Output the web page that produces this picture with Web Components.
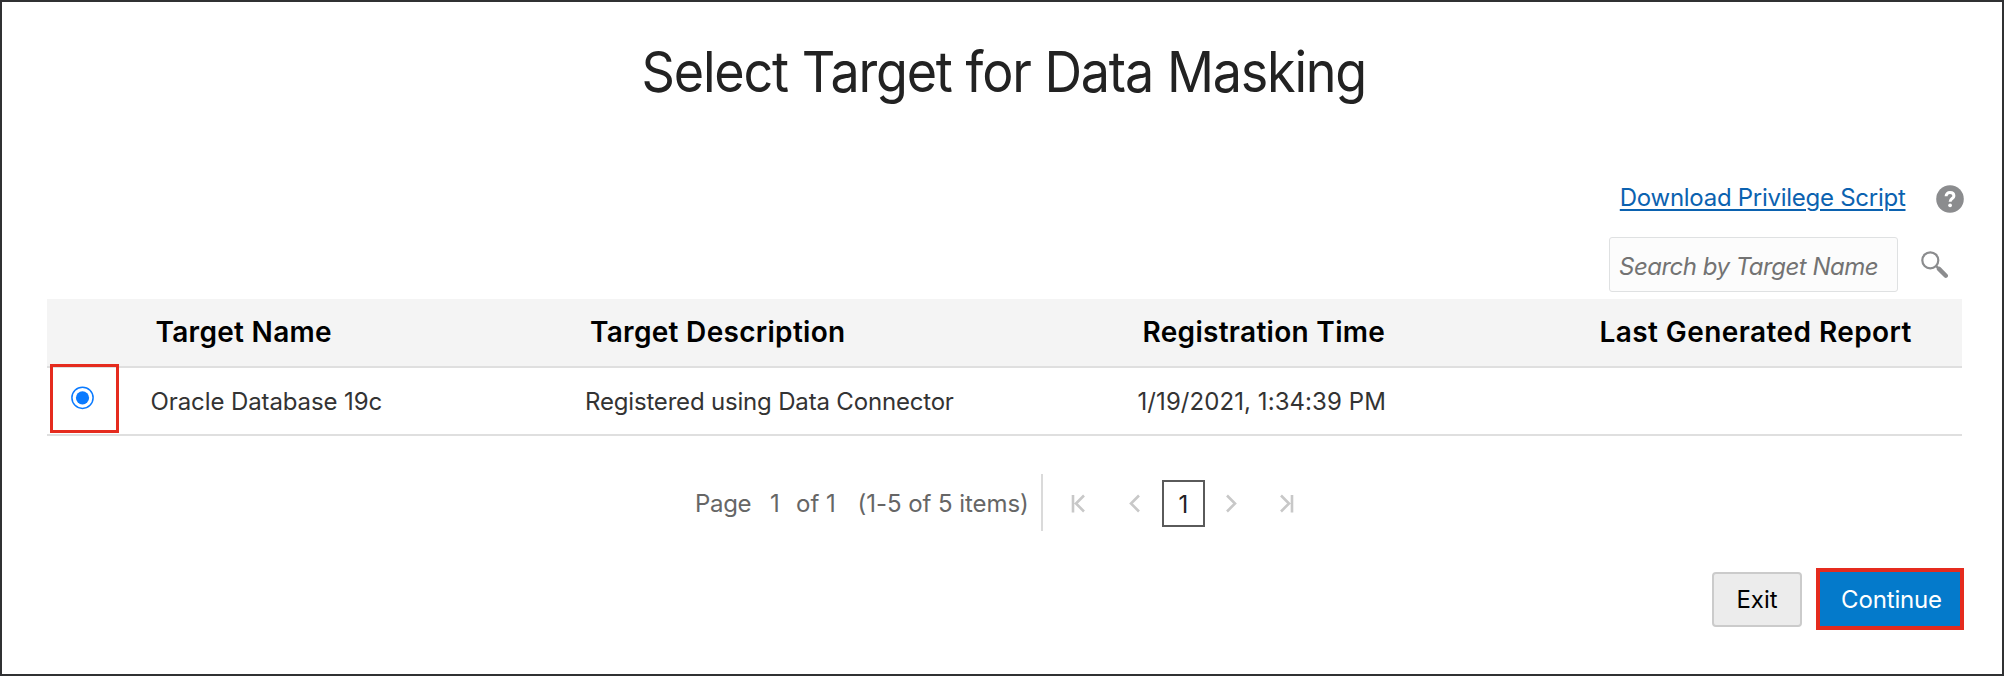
<!DOCTYPE html>
<html lang="en"><head><meta charset="utf-8"><title>Select Target for Data Masking</title>
<style>
body{margin:0;font-family:Inter,"Liberation Sans",sans-serif}
</style></head><body>
<masking-page></masking-page>
<script>
const define=(name,html)=>customElements.define(name,class extends HTMLElement{
  constructor(){super();this.attachShadow({mode:'open'}).innerHTML=html;}
});

define('download-link',`<style>
:host{display:block;font-size:24px;line-height:30px;letter-spacing:-.27px}
a{color:#0b62b0;text-decoration:underline;text-decoration-thickness:1.5px;text-underline-offset:3px}
</style><a href="#"><slot></slot></a>`);

define('help-icon',`<style>:host{display:block;width:28px;height:28px}svg{display:block}</style>
<svg width="28" height="28" viewBox="0 0 28 28"><circle cx="14" cy="14" r="13.8" fill="#8b8c8e"/>
<path d="M10.1 11.2C10.1 8.9 11.7 7.6 14 7.6C16.3 7.6 17.9 8.9 17.9 10.9C17.9 13.5 14.1 13.6 14.1 16.8" fill="none" stroke="#fff" stroke-width="3"/><circle cx="14.1" cy="20.3" r="1.9" fill="#fff"/></svg>`);

define('search-box',`<style>
:host{display:flex;align-items:flex-start;height:55px}
input{box-sizing:border-box;width:289px;height:55px;border:1.5px solid #dfe1e2;border-radius:3px;background:#fcfcfc;padding:3px 0 0 9px;font:italic 24px Inter,"Liberation Sans",sans-serif;outline:0;letter-spacing:-.5px}
input::placeholder{color:#737373;opacity:1}
svg{display:block;margin:13px 0 0 22px}
</style><input placeholder="Search by Target Name"><svg width="28" height="30" viewBox="0 0 28 30"><circle cx="10.3" cy="10.3" r="8" fill="none" stroke="#8b8c8e" stroke-width="2.2"/><path d="M16 15.9L19 18.9" stroke="#8b8c8e" stroke-width="2.2"/><path d="M19 18.9L25.8 25.7" stroke="#8b8c8e" stroke-width="4.4" stroke-linecap="round"/></svg>`);

define('target-radio',`<style>
:host{box-sizing:border-box;display:flex;width:69px;height:69px;border:3px solid #e52b1e;padding:19.5px 0 0 18px}
svg{display:block}
</style><svg width="24" height="24" viewBox="0 0 24 24"><circle cx="11.5" cy="11.8" r="10.6" fill="#fff" stroke="#0a7aff" stroke-width="1.5"/><circle cx="11.5" cy="11.8" r="6.6" fill="#0a7aff"/></svg>`);

define('target-table',`<style>
:host{display:block;width:1915px}
.r{display:grid;grid-template-columns:103.5px 434.5px 552.5px 457px 1fr}
.h{height:67px;background:#f4f4f4;border-bottom:2px solid #dfdfdf;font-size:28px;font-weight:600;line-height:67px;color:#000;letter-spacing:.3px}
.h span{padding-left:5px}
.b{height:66px;border-bottom:2px solid #dfdfdf;font-size:24px;line-height:68px;color:#333;letter-spacing:-.1px}
.desc{letter-spacing:-.18px}
.date{letter-spacing:.07px}
target-radio{margin:-4.5px 0 0 2.5px}
</style>
<div class="r h"><span></span><span>Target Name</span><span>Target Description</span><span>Registration Time</span><span style="letter-spacing:.42px">Last Generated Report</span></div>
<div class="r b"><target-radio></target-radio><span>Oracle Database 19c</span><span class="desc">Registered using Data Connector</span><span class="date">1/19/2021, 1:34:39 PM</span><span></span></div>`);

define('page-bar',`<style>
:host{display:flex;height:57px;margin-bottom:1px;font-size:24px;line-height:60px;color:#666;margin-left:693px}
.s{display:flex;width:346.3px;white-space:nowrap}
.s>*{flex:none}
i{width:1.5px;background:#dadada}
svg{display:block;margin-top:20px;fill:none;stroke:#c8c8c8;stroke-width:2.6}
.n{box-sizing:border-box;width:43px;height:47px;border:2px solid #5a5a5a;margin:6px 0 0 20px;text-align:center;line-height:46px;color:#222;padding-right:1px}
</style><div class="s"><span style="width:75px;letter-spacing:-.3px">Page</span><span style="width:26px">1</span><span style="width:61.5px">of 1</span><span style="letter-spacing:-.05px">(1-5 of 5 items)</span></div><i></i>
<svg width="16" height="20" style="margin-left:28.5px"><path d="M2 1V18.5M13 1.5L5 9.5L13 17.5"/></svg>
<svg width="14" height="20" style="margin-left:41px"><path d="M11 1.5L3 9.5L11 17.5"/></svg>
<div class="n">1</div>
<svg width="14" height="20" style="margin-left:20px"><path d="M2 1.5L10 9.5L2 17.5"/></svg>
<svg width="16" height="20" style="margin-left:40px"><path d="M2 1.5L10 9.5L2 17.5M13 1V18.5"/></svg>`);

define('push-button',`<style>
:host{display:block}
button{box-sizing:border-box;display:block;font:24px Inter,"Liberation Sans",sans-serif;padding:0;line-height:52px;width:90px;height:55px;margin-top:1px;border:2px solid #cbcbcb;border-radius:4px;background:#ececec;color:#000}
:host([primary]) button{width:148px;height:62px;margin:0;border:4px solid #e52b1e;border-radius:0;background:#047acb;color:#fff;line-height:55px;letter-spacing:-.15px;padding-left:3px}
</style><button><slot></slot></button>`);

define('masking-page',`<style>
:host{box-sizing:border-box;display:flex;flex-direction:column;width:2004px;height:676px;border:2px solid #303133;background:#fff}
h1{margin:36px 0 0;padding-left:4px;font-size:56px;font-weight:400;line-height:68px;color:#222;text-align:center;letter-spacing:-1.3px;word-spacing:.5px;transform:scaleX(.93)}
.l{display:flex;justify-content:flex-end;margin:77px 38px 0 0;height:28px;gap:30.5px}
.l help-icon{margin-top:1.5px}
search-box{margin:26px 0 0 1607px}
target-table{margin:7px 0 0 45px}
page-bar{margin-top:37.5px}
.f{display:flex;justify-content:flex-end;gap:14px;margin:36px 38px 0 0;height:62px;align-items:center}
</style><h1>Select Target for Data Masking</h1>
<div class="l"><download-link>Download Privilege Script</download-link><help-icon></help-icon></div>
<search-box></search-box><target-table></target-table><page-bar></page-bar>
<div class="f"><push-button>Exit</push-button><push-button primary>Continue</push-button></div>`);
</script></body></html>
